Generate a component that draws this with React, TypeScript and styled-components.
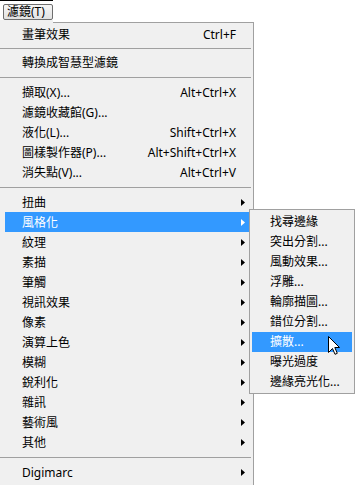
import React from "react";
import styled, { createGlobalStyle } from "styled-components";

const GlobalStyle = createGlobalStyle`
  html, body {
    margin: 0;
    padding: 0;
    background: #ffffff;
  }
  body {
    font-family: "Noto Sans", "Noto Sans CJK TC", sans-serif;
    font-size: 12px;
    color: #000000;
  }
`;

type Entry =
  | { kind: "item"; label: string; shortcut?: string; sub?: boolean; active?: boolean }
  | { kind: "sep"; tight?: boolean };

const mainEntries: Entry[] = [
  { kind: "item", label: "畫筆效果", shortcut: "Ctrl+F" },
  { kind: "sep", tight: true },
  { kind: "item", label: "轉換成智慧型濾鏡" },
  { kind: "sep" },
  { kind: "item", label: "擷取(X)...", shortcut: "Alt+Ctrl+X" },
  { kind: "item", label: "濾鏡收藏館(G)..." },
  { kind: "item", label: "液化(L)...", shortcut: "Shift+Ctrl+X" },
  { kind: "item", label: "圖樣製作器(P)...", shortcut: "Alt+Shift+Ctrl+X" },
  { kind: "item", label: "消失點(V)...", shortcut: "Alt+Ctrl+V" },
  { kind: "sep" },
  { kind: "item", label: "扭曲", sub: true },
  { kind: "item", label: "風格化", sub: true, active: true },
  { kind: "item", label: "紋理", sub: true },
  { kind: "item", label: "素描", sub: true },
  { kind: "item", label: "筆觸", sub: true },
  { kind: "item", label: "視訊效果", sub: true },
  { kind: "item", label: "像素", sub: true },
  { kind: "item", label: "演算上色", sub: true },
  { kind: "item", label: "模糊", sub: true },
  { kind: "item", label: "銳利化", sub: true },
  { kind: "item", label: "雜訊", sub: true },
  { kind: "item", label: "藝術風", sub: true },
  { kind: "item", label: "其他", sub: true },
  { kind: "sep" },
  { kind: "item", label: "Digimarc", sub: true },
];

const subEntries = [
  "找尋邊緣",
  "突出分割...",
  "風動效果...",
  "浮雕...",
  "輪廓描圖...",
  "錯位分割...",
  "擴散...",
  "曝光過度",
  "邊緣亮光化...",
];

const Wrap = styled.div`
  width: 254px;
`;

const TopBar = styled.div`
  display: flex;
  height: 23px;
`;

const TabArea = styled.div`
  width: 53px;
  height: 22px;
  border-top: 1px solid #000000;
  background: linear-gradient(#ffffff 0 19px, #f0f0f0 19px);
  padding: 3px 0 0 3px;
  box-sizing: border-box;
  height: 23px;
`;

const MenuTitle = styled.div`
  width: 50px;
  height: 16px;
  box-sizing: border-box;
  border: 1px solid #6e6e6e;
  border-radius: 2px;
  background: linear-gradient(#f6f6f6, #e2e2e2);
  line-height: 14px;
  padding-left: 3px;
  font-size: 12px;
  white-space: nowrap;
`;

const Filler = styled.div`
  flex: 1;
  height: 22px;
  border-bottom: 1px solid #a0a0a0;
  background: #ffffff;
`;

const Menu = styled.div`
  background: #f0f0f0;
  border-right: 1px solid #a0a0a0;
  padding: 1px 0 20px;
`;

const Row = styled.div<{ $active?: boolean }>`
  position: relative;
  display: flex;
  align-items: center;
  height: 20px;
  margin: 0 4px 0 5px;
  padding-left: 17px;
  background: ${(p) => (p.$active ? "#3399ff" : "transparent")};
  color: ${(p) => (p.$active ? "#ffffff" : "#000000")};
  white-space: nowrap;
`;

const Label = styled.span`
  flex: 1;
`;

const Shortcut = styled.span`
  text-align: right;
`;

const ArrowSlot = styled.span`
  display: flex;
  align-items: center;
  width: 13px;
  padding-left: 5px;
  box-sizing: border-box;
`;

const Separator = styled.div<{ $tight?: boolean }>`
  display: flex;
  align-items: center;
  height: ${(p) => (p.$tight ? 8 : 10)}px;
  margin-right: 2px;
  &::before {
    content: "";
    flex: 1;
    height: 1px;
    background: #a0a0a0;
  }
`;

const SubMenu = styled.div`
  position: absolute;
  left: 244px;
  top: -3px;
  width: 106px;
  box-sizing: border-box;
  border: 1px solid #a0a0a0;
  background: #f0f0f0;
  padding: 2px 0 1px;
  color: #000000;
  z-index: 2;
`;

const SubRow = styled.div<{ $active?: boolean }>`
  position: relative;
  height: 20px;
  line-height: 20px;
  margin: 0 2px;
  padding-left: 18px;
  background: ${(p) => (p.$active ? "#3399ff" : "transparent")};
  color: ${(p) => (p.$active ? "#ffffff" : "#000000")};
  white-space: nowrap;
`;

const Cursor = styled.svg`
  position: absolute;
  left: 76px;
  top: 4px;
`;

const Arrow = ({ color }: { color: string }) => (
  <svg width="4" height="7" viewBox="0 0 4 7">
    <polygon points="0,0 4,3.5 0,7" fill={color} />
  </svg>
);

const PointerCursor = () => (
  <Cursor width="12" height="19" viewBox="0 0 12 19">
    <path
      d="M0.5 0.5 L0.5 16.5 L4.5 12.5 L7 18.3 L9.3 17.3 L6.8 11.5 L11.5 11.5 Z"
      fill="#ffffff"
      stroke="#000000"
      strokeWidth="1"
      strokeLinejoin="miter"
    />
  </Cursor>
);

const StylizeMenu = () => (
  <SubMenu>
    {subEntries.map((label) => (
      <SubRow key={label} $active={label === "擴散..."}>
        {label}
        {label === "擴散..." && <PointerCursor />}
      </SubRow>
    ))}
  </SubMenu>
);

export default function App() {
  return (
    <>
      <GlobalStyle />
      <Wrap>
        <TopBar>
          <TabArea>
            <MenuTitle>濾鏡(T)</MenuTitle>
          </TabArea>
          <Filler />
        </TopBar>
        <Menu>
          {mainEntries.map((e, i) =>
            e.kind === "sep" ? (
              <Separator key={i} $tight={e.tight} />
            ) : (
              <Row key={i} $active={e.active}>
                <Label>{e.label}</Label>
                {e.shortcut && <Shortcut>{e.shortcut}</Shortcut>}
                <ArrowSlot>
                  {e.sub && <Arrow color={e.active ? "#ffffff" : "#000000"} />}
                </ArrowSlot>
                {e.active && <StylizeMenu />}
              </Row>
            )
          )}
        </Menu>
      </Wrap>
    </>
  );
}
